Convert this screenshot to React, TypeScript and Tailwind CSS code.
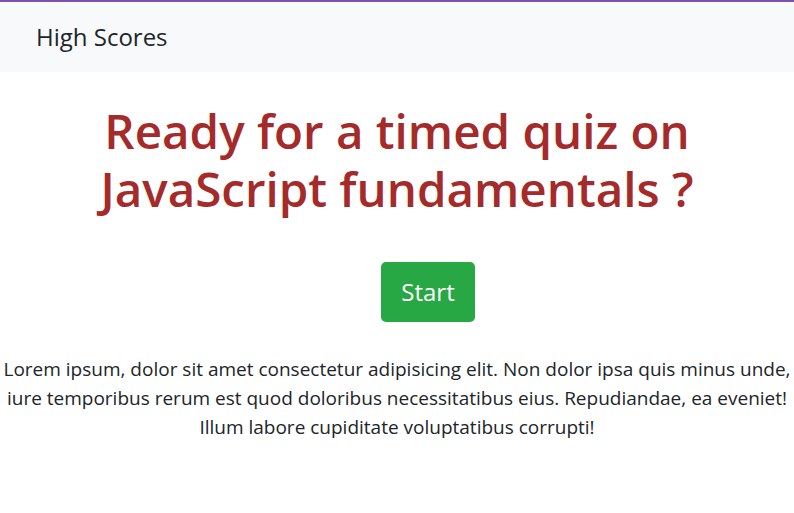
export default function App() {
  return (
    <div className="min-h-screen bg-white font-['Open_Sans',sans-serif] text-[#212529]">
      <nav className="flex h-[72px] items-center border-t-2 border-[#7952b3] bg-[#f8f9fa] px-9">
        <a href="#" className="text-[24px] leading-none text-[#212529]">
          High Scores
        </a>
      </nav>

      <main className="flex flex-col items-center text-center">
        <h1 className="mt-[30px] text-[47.5px] font-semibold leading-[58px] text-[#a52a2a]">
          Ready for a timed quiz on
          <br />
          JavaScript fundamentals ?
        </h1>

        {/* button sits a little right of centre in the original */}
        <button className="ml-[62px] mt-[44px] h-[60px] rounded-[5px] bg-[#28a745] px-[20px] text-[24px] text-white">
          Start
        </button>

        <p className="mt-[33px] text-[19px] leading-[29px]">
          Lorem ipsum, dolor sit amet consectetur adipisicing elit. Non dolor ipsa quis minus unde,
          <br />
          iure temporibus rerum est quod doloribus necessitatibus eius. Repudiandae, ea eveniet!
          <br />
          Illum labore cupiditate voluptatibus corrupti!
        </p>
      </main>
    </div>
  );
}
